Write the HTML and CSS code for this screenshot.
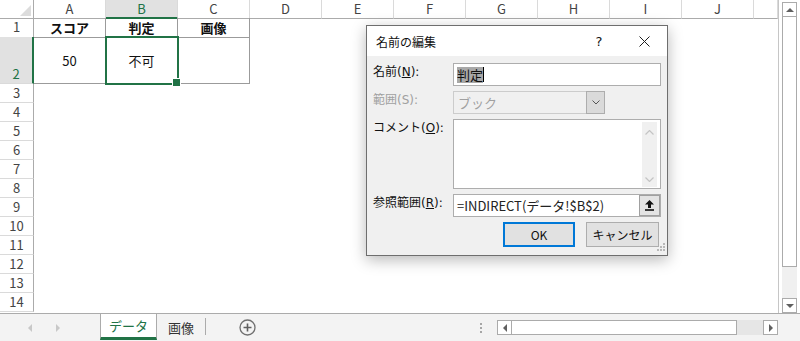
FILE: index.html
```html
<!DOCTYPE html>
<html lang="ja">
<head>
    <meta charset="UTF-8">
    <title>名前の編集</title>
    <link rel="stylesheet" href="styles.css">
</head>
<body>
<div class="excel">
    <div class="main">
        <div class="sheet">
            <div class="row hdr">
                <div class="corner"></div>
                <div class="colh">A</div>
                <div class="colh sel">B</div>
                <div class="colh">C</div>
                <div class="colh">D</div>
                <div class="colh">E</div>
                <div class="colh">F</div>
                <div class="colh">G</div>
                <div class="colh">H</div>
                <div class="colh">I</div>
                <div class="colh">J</div>
                <div class="colh"></div>
            </div>
            <div class="row">
                <div class="rowh">1</div>
                <div class="cell th">スコア</div>
                <div class="cell th">判定</div>
                <div class="cell th">画像</div>
            </div>
            <div class="row tall">
                <div class="rowh sel">2</div>
                <div class="cell">50</div>
                <div class="cell active">不可</div>
                <div class="cell"></div>
            </div>
            <div class="row"><div class="rowh">3</div></div>
            <div class="row"><div class="rowh">4</div></div>
            <div class="row"><div class="rowh">5</div></div>
            <div class="row"><div class="rowh">6</div></div>
            <div class="row"><div class="rowh">7</div></div>
            <div class="row"><div class="rowh">8</div></div>
            <div class="row"><div class="rowh">9</div></div>
            <div class="row"><div class="rowh">10</div></div>
            <div class="row"><div class="rowh">11</div></div>
            <div class="row"><div class="rowh">12</div></div>
            <div class="row"><div class="rowh">13</div></div>
            <div class="row"><div class="rowh">14</div></div>
        </div>
        <div class="vscroll">
            <div class="vbtn"><span class="tri up"></span></div>
            <div class="vthumb"></div>
            <div class="vtrack"></div>
            <div class="vbtn"><span class="tri down"></span></div>
        </div>
    </div>

    <div class="tabbar">
        <div class="tabnav">
            <span class="tri left light"></span>
            <span class="tri right light"></span>
        </div>
        <div class="tab active">データ</div>
        <div class="tab">画像</div>
        <div class="tabsep"></div>
        <div class="addsheet">
            <svg width="17" height="17" viewBox="0 0 17 17">
                <circle cx="8.5" cy="8.5" r="7.5" fill="none" stroke="#707070" stroke-width="1.3"/>
                <path d="M8.5 4.5V12.5M4.5 8.5H12.5" stroke="#606060" stroke-width="1.6"/>
            </svg>
        </div>
        <div class="rightgroup">
            <div class="dots"><i></i><i></i><i></i></div>
            <div class="hscroll">
                <div class="hbtn"><span class="tri left"></span></div>
                <div class="hthumb"></div>
                <div class="htrack"></div>
                <div class="hbtn"><span class="tri right"></span></div>
            </div>
        </div>
    </div>

    <!-- 名前の編集ダイアログ -->
    <div class="dialog">
        <div class="dlg-title">
            <span class="dlg-name">名前の編集</span>
            <span class="dlg-help">?</span>
            <span class="dlg-close">
                <svg width="11" height="11" viewBox="0 0 11 11"><path d="M0.5 0.5L10.5 10.5M10.5 0.5L0.5 10.5" stroke="#1e1e1e" stroke-width="1"/></svg>
            </span>
        </div>
        <div class="dlg-body">
            <label class="lbl">名前(<u>N</u>):</label>
            <div class="field"><span class="seltext">判定</span><span class="caret"></span></div>

            <label class="lbl off">範囲(S):</label>
            <div class="combo">
                <span class="combo-text">ブック</span>
                <span class="drop">
                    <svg width="8" height="5" viewBox="0 0 8 5"><path d="M0.5 0.5L4 4L7.5 0.5" fill="none" stroke="#555" stroke-width="1"/></svg>
                </span>
            </div>

            <label class="lbl">コメント(<u>O</u>):</label>
            <div class="memo">
                <div class="memo-bar">
                    <svg width="9" height="5" viewBox="0 0 9 5"><path d="M0.5 4.5L4.5 0.5L8.5 4.5" fill="none" stroke="#c4c4c4" stroke-width="1.2"/></svg>
                    <svg width="9" height="5" viewBox="0 0 9 5"><path d="M0.5 0.5L4.5 4.5L8.5 0.5" fill="none" stroke="#c4c4c4" stroke-width="1.2"/></svg>
                </div>
            </div>

            <label class="lbl">参照範囲(<u>R</u>):</label>
            <div class="field ref">
                <span class="reftext">=INDIRECT(データ!$B$2)</span>
                <span class="pick">
                    <svg width="9" height="11" viewBox="0 0 9 11"><path d="M4.5 0L9 4.5H6V8H3V4.5H0Z" fill="#111"/><rect x="0" y="9.2" width="9" height="1.6" fill="#111"/></svg>
                </span>
            </div>

            <div class="btns">
                <button class="btn ok">OK</button>
                <button class="btn">キャンセル</button>
            </div>
        </div>
        <svg class="grip" width="12" height="12" viewBox="0 0 12 12">
            <rect x="9" y="1" width="2" height="2" fill="#b8b8b8"/>
            <rect x="6" y="4" width="2" height="2" fill="#b8b8b8"/>
            <rect x="9" y="4" width="2" height="2" fill="#b8b8b8"/>
            <rect x="3" y="7" width="2" height="2" fill="#b8b8b8"/>
            <rect x="6" y="7" width="2" height="2" fill="#b8b8b8"/>
            <rect x="9" y="7" width="2" height="2" fill="#b8b8b8"/>
        </svg>
    </div>
</div>
</body>
</html>
```

FILE: styles.css
```css
* {
    box-sizing: border-box;
}

body {
    margin: 0;
    background-color: #fff;
    color: #222;
    font-family: "Noto Sans CJK JP", sans-serif;
    overflow: hidden;
}

.excel {
    position: relative;
    width: 800px;
    height: 341px;
}

.main {
    display: flex;
    height: 313px;
}

/* シート */
.sheet {
    width: 779px;
    border-right: 1px solid #c6c6c6;
}

.row {
    display: grid;
    grid-template-columns: 34px repeat(10, 72px) 1fr;
    height: 19px;
}

.row.hdr {
    height: 18px;
}

.row.tall {
    height: 47px;
}

.corner {
    display: flex;
    justify-content: flex-end;
    align-items: flex-end;
    padding: 0 2px 2px 0;
    border-right: 1px solid #ababab;
    border-bottom: 1px solid #ababab;
}

.corner::after {
    content: "";
    border-style: solid;
    border-width: 0 0 11px 11px;
    border-color: transparent transparent #dcdcdc transparent;
}

.colh {
    border-right: 1px solid #dadada;
    border-bottom: 1px solid #ababab;
    font-size: 13px;
    line-height: 17px;
    text-align: center;
    color: #444;
}

.colh.sel {
    background-color: #e1e1e1;
    color: #217346;
    border-bottom: 2px solid #217346;
}

.rowh {
    border-right: 1px solid #ababab;
    border-bottom: 1px solid #dadada;
    font-size: 13px;
    line-height: 18px;
    text-align: center;
    color: #444;
}

.rowh.sel {
    display: flex;
    align-items: flex-end;
    justify-content: center;
    background-color: #e1e1e1;
    color: #217346;
    border-right: 2px solid #217346;
}

.cell {
    display: flex;
    align-items: center;
    justify-content: center;
    border-right: 1px solid #9b9b9b;
    border-bottom: 1px solid #9b9b9b;
    font-size: 13px;
    color: #111;
}

.cell.th {
    font-weight: bold;
}

.cell.active {
    position: relative;
    outline: 2px solid #217346;
    outline-offset: -1px;
}

.cell.active::after {
    content: "";
    position: absolute;
    right: -4px;
    bottom: -4px;
    width: 7px;
    height: 7px;
    background-color: #217346;
    border: 1px solid #fff;
}

/* 三角形 */
.tri {
    width: 0;
    height: 0;
    border-style: solid;
    border-color: transparent;
}

.tri.up {
    border-width: 0 4px 4px 4px;
    border-bottom-color: #606060;
}

.tri.down {
    border-width: 4px 4px 0 4px;
    border-top-color: #606060;
}

.tri.left {
    border-width: 4px 4px 4px 0;
    border-right-color: #606060;
}

.tri.right {
    border-width: 4px 0 4px 4px;
    border-left-color: #606060;
}

.tri.light.left {
    border-right-color: #c8c8c8;
}

.tri.light.right {
    border-left-color: #c8c8c8;
}

/* 縦スクロール */
.vscroll {
    width: 21px;
    padding: 2px 3px 0 3px;
    display: flex;
    flex-direction: column;
}

.vbtn {
    height: 15px;
    display: flex;
    align-items: center;
    justify-content: center;
    border: 1px solid #ababab;
    background-color: #fff;
}

.vthumb {
    height: 250px;
    border: 1px solid #ababab;
    border-top: none;
    background-color: #fff;
}

.vtrack {
    flex: 1;
    background-color: #f0f0f0;
}

/* シートタブ */
.tabbar {
    display: flex;
    height: 28px;
    border-top: 1px solid #ababab;
    background-color: #f3f3f3;
}

.tabnav {
    width: 100px;
    display: flex;
    align-items: center;
    gap: 24px;
    padding-left: 28px;
}

.tab {
    height: 26px;
    display: flex;
    align-items: center;
    justify-content: center;
    font-size: 13px;
    color: #333;
}

.tab.active {
    width: 57px;
    background-color: #fff;
    color: #217346;
    border-left: 1px solid #ababab;
    border-right: 1px solid #ababab;
    border-bottom: 3px solid #217346;
}

.tab:not(.active) {
    width: 48px;
}

.tabsep {
    width: 1px;
    height: 17px;
    margin-top: 4px;
    background-color: #ababab;
}

.addsheet {
    display: flex;
    align-items: center;
    margin-left: 33px;
}

.rightgroup {
    margin-left: auto;
    display: flex;
    align-items: center;
    width: 326px;
}

.dots {
    width: 14px;
    display: flex;
    flex-direction: column;
    align-items: center;
    gap: 2px;
}

.dots i {
    width: 2px;
    height: 2px;
    background-color: #a6a6a6;
}

.hscroll {
    margin-left: 9px;
    width: 281px;
    height: 15px;
    display: flex;
}

.hbtn {
    width: 15px;
    display: flex;
    align-items: center;
    justify-content: center;
    border: 1px solid #ababab;
    background-color: #fff;
}

.hthumb {
    width: 225px;
    border: 1px solid #ababab;
    border-left: none;
    background-color: #fff;
}

.htrack {
    flex: 1;
    background-color: #e6e6e6;
}

/* ダイアログ */
.dialog {
    position: absolute;
    left: 366px;
    top: 25px;
    width: 302px;
    height: 231px;
    border: 1px solid #6e6e6e;
    background-color: #f0f0f0;
    box-shadow: 0 4px 14px rgba(0, 0, 0, 0.28);
}

.dlg-title {
    height: 30px;
    display: flex;
    align-items: center;
    background-color: #fff;
    padding-left: 9px;
    font-size: 12px;
    color: #111;
}

.dlg-name {
    flex: 1;
}

.dlg-help {
    width: 46px;
    text-align: center;
    font-family: "DejaVu Sans", sans-serif;
    font-size: 13px;
}

.dlg-close {
    width: 45px;
    display: flex;
    justify-content: center;
}

.dlg-body {
    display: grid;
    grid-template-columns: 80px 208px;
    grid-template-rows: 23px 23px 70px 23px 25px;
    row-gap: 5px;
    padding: 7px 5px 0 6px;
}

.lbl {
    padding-top: 1px;
    font-family: "DejaVu Sans", "Noto Sans CJK JP", sans-serif;
    font-size: 12px;
    line-height: 16px;
    color: #111;
}

.lbl.off {
    color: #a0a0a0;
}

.field {
    display: flex;
    align-items: center;
    padding: 0 3px;
    border: 1px solid #adadad;
    background-color: #fff;
    font-size: 13px;
    line-height: 16px;
}

.seltext {
    background-color: #a8a8a8;
    color: #111;
}

.caret {
    width: 1px;
    height: 15px;
    background-color: #000;
}

.combo {
    width: 152px;
    display: flex;
    align-items: center;
    border: 1px solid #cccccc;
    background-color: #f0f0f0;
}

.combo-text {
    flex: 1;
    padding-left: 4px;
    font-size: 13px;
    color: #a0a0a0;
}

.drop {
    width: 19px;
    height: 23px;
    margin: -1px -1px -1px 0;
    display: flex;
    align-items: center;
    justify-content: center;
    border: 1px solid #adadad;
    background-color: #dadada;
}

.memo {
    display: flex;
    justify-content: flex-end;
    padding: 2px 3px 1px 0;
    border: 1px solid #adadad;
    background-color: #fff;
}

.memo-bar {
    width: 15px;
    display: flex;
    flex-direction: column;
    align-items: center;
    justify-content: space-between;
    padding: 8px 0 5px;
    background-color: #f0f0f0;
}

.field.ref {
    padding-right: 0;
}

.reftext {
    flex: 1;
    font-size: 13px;
}

.pick {
    width: 21px;
    height: 21px;
    display: flex;
    align-items: center;
    justify-content: center;
    border: 1px solid #a0a0a0;
    background-color: #e3e3e3;
}

.btns {
    grid-column: 2;
    display: flex;
    justify-content: flex-end;
    gap: 11px;
    padding-right: 2px;
}

.btn {
    height: 25px;
    padding: 0;
    border: 1px solid #adadad;
    background-color: #e1e1e1;
    font-family: "Noto Sans CJK JP", sans-serif;
    font-size: 12px;
    color: #111;
    width: 73px;
}

.btn.ok {
    width: 72px;
    border: 2px solid #0078d7;
}

.grip {
    position: absolute;
    right: 1px;
    bottom: 1px;
}
```
